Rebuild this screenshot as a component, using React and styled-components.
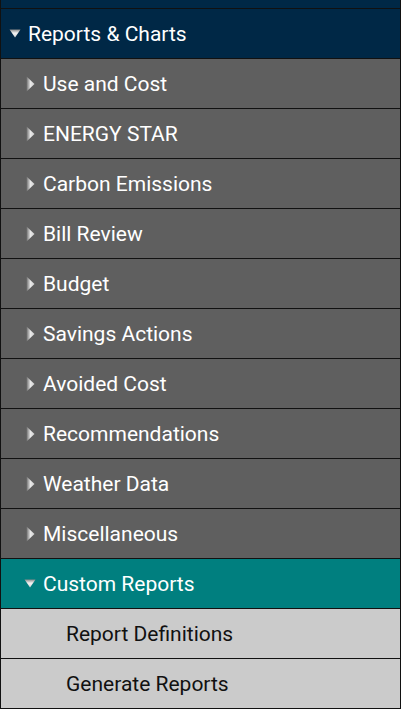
import React from "react";
import styled, { createGlobalStyle } from "styled-components";

const Global = createGlobalStyle`
  body {
    margin: 0;
    background: #ffffff;
    font-family: Roboto, "Liberation Sans", sans-serif;
  }
`;

const items = [
  "Use and Cost",
  "ENERGY STAR",
  "Carbon Emissions",
  "Bill Review",
  "Budget",
  "Savings Actions",
  "Avoided Cost",
  "Recommendations",
  "Weather Data",
  "Miscellaneous",
];

const subItems = ["Report Definitions", "Generate Reports"];

const Arrow = ({ open }) =>
  open ? (
    <svg width="12" height="9" viewBox="0 0 12 9">
      <defs>
        <linearGradient id="gd" x1="0" y1="0" x2="0" y2="1">
          <stop offset="0" stopColor="#8a8a8a" />
          <stop offset="0.45" stopColor="#f4f4f4" />
          <stop offset="1" stopColor="#d4d4d4" />
        </linearGradient>
      </defs>
      <path d="M0.5 0.5 L11.5 0.5 L6 8.5 Z" fill="url(#gd)" />
    </svg>
  ) : (
    <svg width="9" height="16" viewBox="0 0 9 16">
      <defs>
        <linearGradient id="gr" x1="0" y1="0" x2="1" y2="0">
          <stop offset="0" stopColor="#6e6e6e" />
          <stop offset="0.5" stopColor="#e8e8e8" />
          <stop offset="1" stopColor="#cfcfcf" />
        </linearGradient>
      </defs>
      <path d="M0.5 0.5 L8.5 8 L0.5 15.5 Z" fill="url(#gr)" />
    </svg>
  );

export default function App() {
  return (
    <>
      <Global />
      <Menu>
        <TopStrip />
        <Header>
          <Icon>
            <Arrow open />
          </Icon>
          Reports &amp; Charts
        </Header>
        {items.map((label) => (
          <Row key={label}>
            <Icon>
              <Arrow />
            </Icon>
            {label}
          </Row>
        ))}
        <Row $active>
          <Icon>
            <Arrow open />
          </Icon>
          Custom Reports
        </Row>
        {subItems.map((label) => (
          <SubRow key={label}>{label}</SubRow>
        ))}
      </Menu>
    </>
  );
}

const Menu = styled.div`
  width: 401px;
  box-sizing: border-box;
  border-left: 1px solid #111;
  border-right: 1px solid #111;
  display: flex;
  flex-direction: column;
`;

const TopStrip = styled.div`
  height: 8px;
  background: #002846;
  border-bottom: 1px solid #111;
`;

const Header = styled.div`
  height: 49px;
  display: flex;
  align-items: center;
  gap: 7px;
  padding-left: 8px;
  background: #002846;
  border-bottom: 1px solid #111;
  color: #ffffff;
  font-size: 21px;
`;

const Icon = styled.span`
  display: flex;
  align-items: center;
  justify-content: center;
  width: 12px;
  height: 16px;
`;

const Row = styled.div`
  height: 49px;
  display: flex;
  align-items: center;
  gap: 7px;
  padding-left: 23px;
  background: ${(p) => (p.$active ? "#007f7f" : "#5f5f5f")};
  border-bottom: 1px solid #111;
  color: #ffffff;
  font-size: 21px;
`;

const SubRow = styled.div`
  height: 49px;
  display: flex;
  align-items: center;
  padding-left: 65px;
  background: #cbcbcb;
  border-bottom: 1px solid #111;
  color: #111111;
  font-size: 21px;
`;
